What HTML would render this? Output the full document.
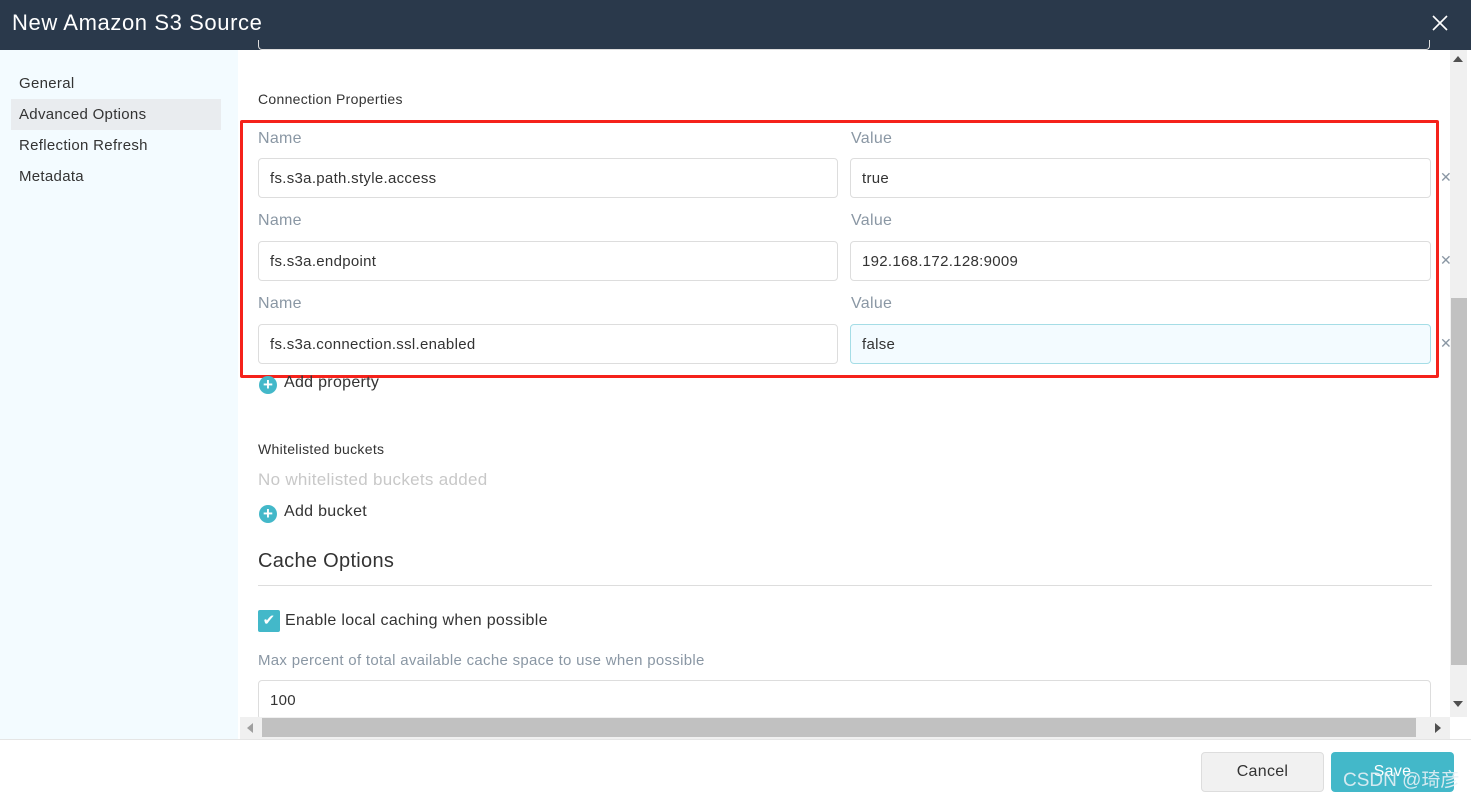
<!DOCTYPE html>
<html><head><meta charset="utf-8"><style>
*{box-sizing:border-box;margin:0;padding:0}
body{width:1471px;height:796px;overflow:hidden;background:#fff;font-family:"Liberation Sans","Noto Sans CJK SC",sans-serif;position:relative;color:#333;letter-spacing:0.3px}
.abs{position:absolute}
.hdr{left:0;top:0;width:1471px;height:50px;background:#2a394b;color:#fff;font-size:22px;padding:10px 12px;letter-spacing:0.6px}
.side{left:0;top:50px;width:238px;height:690px;background:#f3fbff}
.nav{position:absolute;left:11px;width:210px;height:31px;font-size:15px;color:#333;padding:7px 8px}
.lbl{font-size:15px;color:#333}
.flab{font-size:16px;color:#8a97a4}
.inp{position:absolute;height:40px;border:1px solid #ddd;border-radius:4px;font-size:15px;padding:11px 11px 9px;color:#333;background:#fff}
.x{position:absolute;left:1440px;font-size:14px;color:#8a97a4}
.plus{display:inline-block;width:18px;height:18px;border-radius:50%;background:#43b8c9;color:#fff;font-size:17px;line-height:18px;text-align:center;vertical-align:-3px;margin-right:7px;font-weight:bold;letter-spacing:0}
</style></head><body>
<div class="abs hdr">New Amazon S3 Source<svg style="position:absolute;left:1432px;top:15px" width="16" height="16" viewBox="0 0 16 16"><path d="M1 1L15 15M15 1L1 15" stroke="#fff" stroke-width="1.6"/></svg></div>
<div class="abs side">
<div class="nav" style="top:18px">General</div>
<div class="nav" style="top:49px;background:#e9ecef">Advanced Options</div>
<div class="nav" style="top:80px">Reflection Refresh</div>
<div class="nav" style="top:111px">Metadata</div>
</div>
<div class="abs" style="left:258px;top:40px;width:1172px;height:10px;border:1px solid #ddd;border-top:none;border-radius:0 0 4px 4px"></div>
<div class="abs lbl" style="left:258px;top:91px;font-size:14px">Connection Properties</div>
<div class="abs flab" style="left:258px;top:130px">Name</div><div class="abs flab" style="left:851px;top:130px">Value</div>
<div class="inp" style="left:258px;top:158px;width:580px">fs.s3a.path.style.access</div>
<div class="inp" style="left:850px;top:158px;width:581px">true</div><div class="x" style="top:169px">✕</div>
<div class="abs flab" style="left:258px;top:212px">Name</div><div class="abs flab" style="left:851px;top:212px">Value</div>
<div class="inp" style="left:258px;top:241px;width:580px">fs.s3a.endpoint</div>
<div class="inp" style="left:850px;top:241px;width:581px">192.168.172.128:9009</div><div class="x" style="top:252px">✕</div>
<div class="abs flab" style="left:258px;top:295px">Name</div><div class="abs flab" style="left:851px;top:295px">Value</div>
<div class="inp" style="left:258px;top:324px;width:580px">fs.s3a.connection.ssl.enabled</div>
<div class="inp" style="left:850px;top:324px;width:581px;background:#f3fbff;border-color:#a5dde6">false</div><div class="x" style="top:335px">✕</div>
<div class="abs" style="left:240px;top:120px;width:1199px;height:258px;border:3px solid #f5221b;border-radius:2px"></div>
<div class="abs lbl" style="left:259px;top:374px;font-size:16px"><span class="plus">+</span>Add property</div>
<div class="abs lbl" style="left:258px;top:441px;font-size:14px">Whitelisted buckets</div>
<div class="abs" style="left:258px;top:470px;font-size:17px;color:#c8c8c8">No whitelisted buckets added</div>
<div class="abs lbl" style="left:259px;top:503px;font-size:16px"><span class="plus">+</span>Add bucket</div>
<div class="abs" style="left:258px;top:550px;font-size:20px;color:#333">Cache Options</div>
<div class="abs" style="left:258px;top:585px;width:1174px;height:1px;background:#ddd"></div>
<div class="abs" style="left:258px;top:610px;width:22px;height:22px;background:#43b8c9;border-radius:2px;color:#fff;font-size:15px;text-align:center;line-height:22px">✔</div>
<div class="abs lbl" style="left:285px;top:612px;font-size:16px">Enable local caching when possible</div>
<div class="abs flab" style="left:258px;top:652px;font-size:15px">Max percent of total available cache space to use when possible</div>
<div class="inp" style="left:258px;top:680px;width:1173px">100</div>
<div class="abs" style="left:1450px;top:50px;width:17px;height:667px;background:#f0f0f0"></div>
<div class="abs" style="left:1451px;top:298px;width:16px;height:367px;background:#c1c1c1"></div>
<div class="abs" style="left:1453px;top:56px;width:0;height:0;border:5px solid transparent;border-bottom:6px solid #505050;border-top:none"></div>
<div class="abs" style="left:1453px;top:701px;width:0;height:0;border:5px solid transparent;border-top:6px solid #505050;border-bottom:none"></div>
<div class="abs" style="left:240px;top:717px;width:1210px;height:22px;background:#f0f0f0"></div>
<div class="abs" style="left:262px;top:718px;width:1154px;height:19px;background:#c1c1c1"></div>
<div class="abs" style="left:247px;top:723px;width:0;height:0;border:5px solid transparent;border-right:6px solid #a0a0a0;border-left:none"></div>
<div class="abs" style="left:1435px;top:723px;width:0;height:0;border:5px solid transparent;border-left:6px solid #505050;border-right:none"></div>
<div class="abs" style="left:0;top:739px;width:1471px;height:1px;background:#e5e5e5"></div>
<div class="abs" style="left:1201px;top:752px;width:123px;height:40px;background:#f1f1f1;border:1px solid #ddd;border-radius:4px;font-size:16px;text-align:center;line-height:38px;color:#333">Cancel</div>
<div class="abs" style="left:1331px;top:752px;width:123px;height:40px;background:#43b8c9;border-radius:4px;font-size:16px;text-align:center;line-height:40px;color:#fff">Save</div>
<div class="abs" style="left:1343px;top:765px;font-size:19px;color:rgba(230,240,245,.9);letter-spacing:0">CSDN @琦彦</div>
</body></html>
